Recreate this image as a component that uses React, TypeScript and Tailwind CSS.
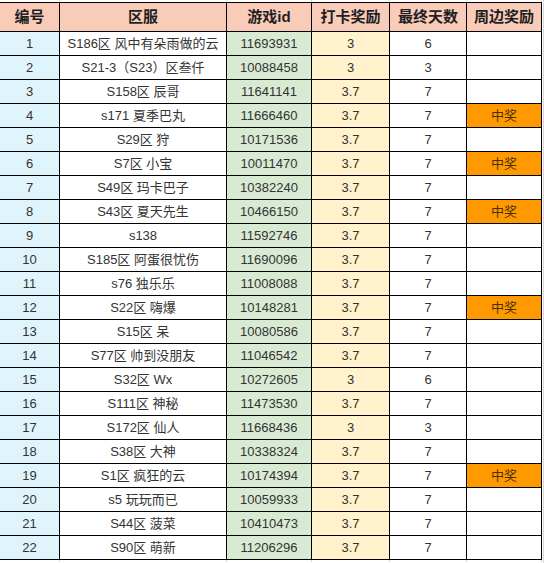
import React from "react";

const rows: [string, string, string, string, string, boolean][] = [
  ["1", "S186区 风中有朵雨做的云", "11693931", "3", "6", false],
  ["2", "S21-3（S23）区叁仟", "10088458", "3", "3", false],
  ["3", "S158区 辰哥", "11641141", "3.7", "7", false],
  ["4", "s171 夏季巴丸", "11666460", "3.7", "7", true],
  ["5", "S29区 狩", "10171536", "3.7", "7", false],
  ["6", "S7区 小宝", "10011470", "3.7", "7", true],
  ["7", "S49区 玛卡巴子", "10382240", "3.7", "7", false],
  ["8", "S43区 夏天先生", "10466150", "3.7", "7", true],
  ["9", "s138", "11592746", "3.7", "7", false],
  ["10", "S185区 阿蛋很忧伤", "11690096", "3.7", "7", false],
  ["11", "s76 独乐乐", "11008088", "3.7", "7", false],
  ["12", "S22区 嗨爆", "10148281", "3.7", "7", true],
  ["13", "S15区 呆", "10080586", "3.7", "7", false],
  ["14", "S77区 帅到没朋友", "11046542", "3.7", "7", false],
  ["15", "S32区 Wx", "10272605", "3", "6", false],
  ["16", "S111区 神秘", "11473530", "3.7", "7", false],
  ["17", "S172区 仙人", "11668436", "3", "3", false],
  ["18", "S38区 大神", "10338324", "3.7", "7", false],
  ["19", "S1区 疯狂的云", "10174394", "3.7", "7", true],
  ["20", "s5 玩玩而已", "10059933", "3.7", "7", false],
  ["21", "S44区 菠菜", "10410473", "3.7", "7", false],
  ["22", "S90区 萌新", "11206296", "3.7", "7", false],
];

const headers = ["编号", "区服", "游戏id", "打卡奖励", "最终天数", "周边奖励"];

const cell = "border-r border-b border-black flex items-center justify-center";

function Faint() {
  return (
    <div className="grid grid-cols-[60px_167px_85px_78px_77px_75px] h-[2px]">
      {headers.map((h) => (
        <div key={h} className="border-r border-[#d8d8d8]" />
      ))}
    </div>
  );
}

export default function App() {
  return (
    <div
      className="w-[544px] h-[563px] bg-white overflow-hidden relative"
      style={{ fontFamily: '"Liberation Sans", Arial, "Noto Sans CJK SC", sans-serif' }}
    >
      <Faint />
      <div className="grid grid-cols-[60px_167px_85px_78px_77px_75px] border-t border-black w-[542px]">
        {headers.map((h) => (
          <div
            key={h}
            className={`${cell} h-[29px] bg-[#f9cbb9] text-[15px] font-bold text-[#1f1f1f]`}
          >
            {h}
          </div>
        ))}
        {rows.map((r) => (
          <React.Fragment key={r[0]}>
            <div className={`${cell} h-[24px] bg-[#e0f4fb] text-[13px] text-[#333]`}>{r[0]}</div>
            <div className={`${cell} h-[24px] bg-white text-[13px] text-[#333]`}>{r[1]}</div>
            <div className={`${cell} h-[24px] bg-[#d9ead3] text-[13px] text-[#333]`}>{r[2]}</div>
            <div className={`${cell} h-[24px] bg-[#fff2cc] text-[13px] text-[#333]`}>{r[3]}</div>
            <div className={`${cell} h-[24px] bg-white text-[13px] text-[#333]`}>{r[4]}</div>
            <div
              className={`${cell} h-[24px] text-[13px] ${r[5] ? "bg-[#ff9900] text-[#4a3200]" : "bg-white"}`}
            >
              {r[5] ? "中奖" : ""}
            </div>
          </React.Fragment>
        ))}
      </div>
      <div className="absolute top-0 left-[543px] w-px h-[563px] bg-[#d8d8d8]" />
      <Faint />
    </div>
  );
}
